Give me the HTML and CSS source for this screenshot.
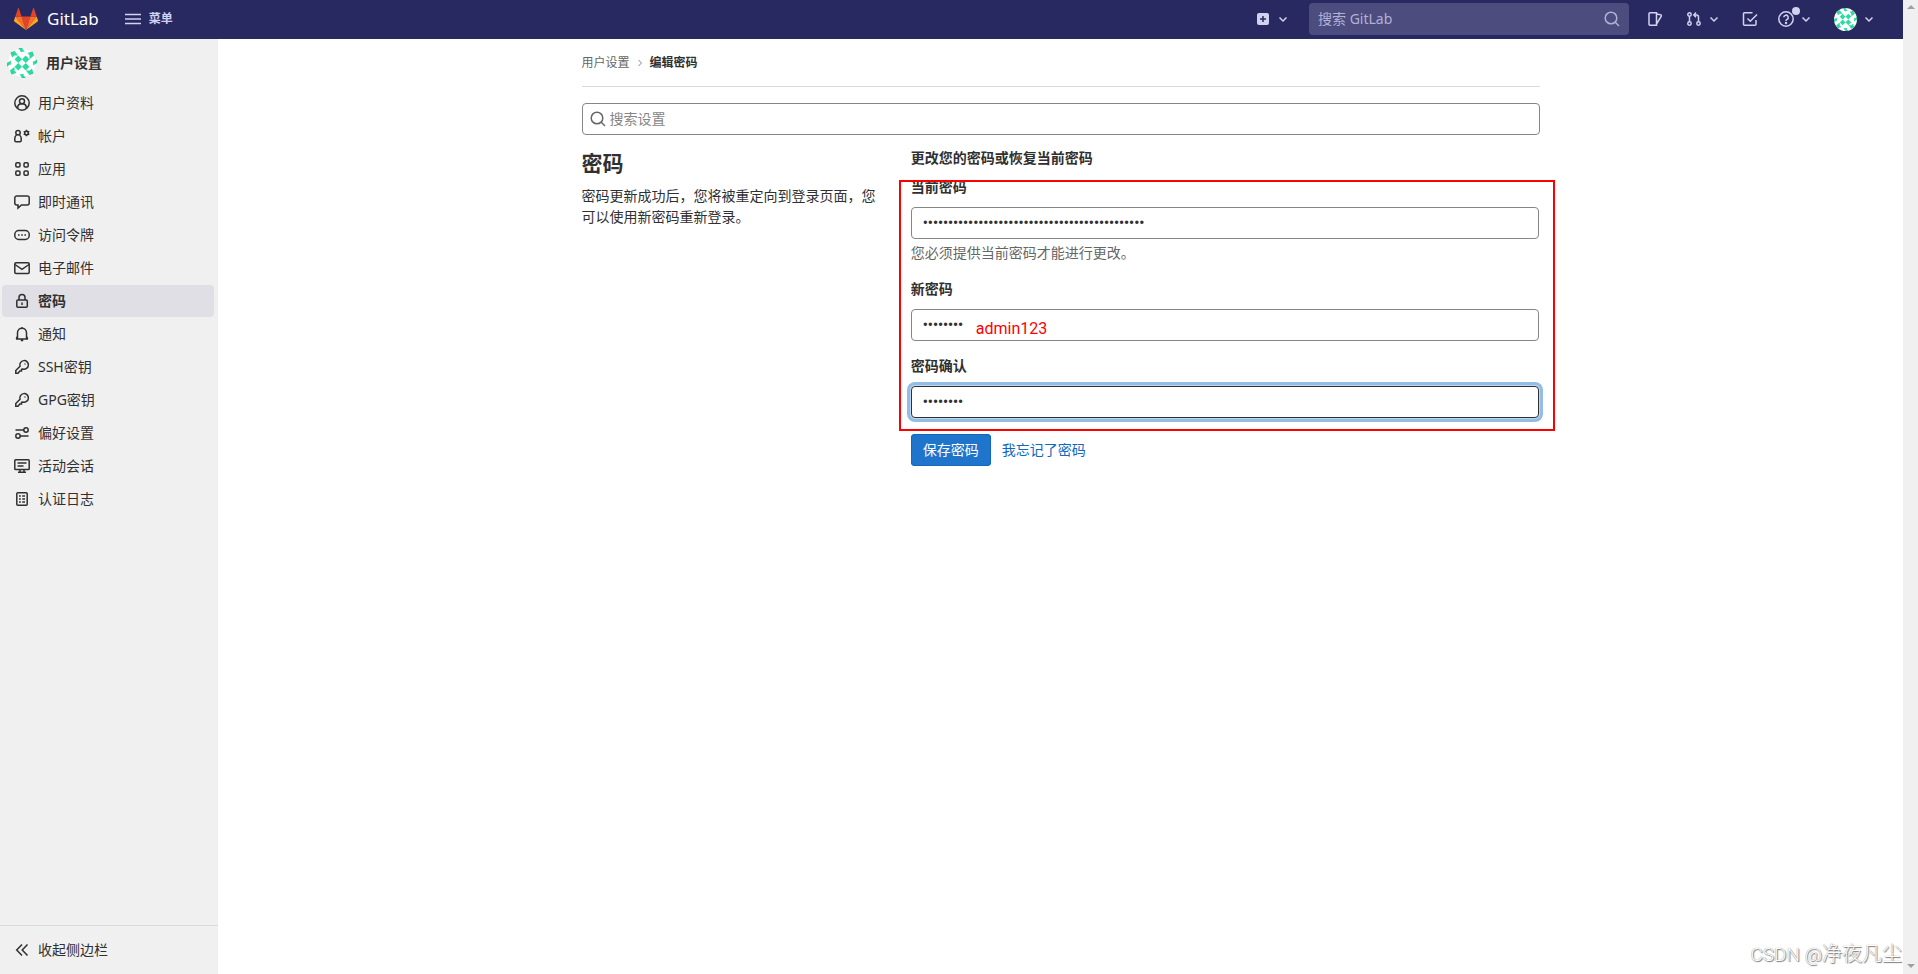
FILE: index.html
```
<!DOCTYPE html>
<html lang="zh-CN">
<head>
<meta charset="utf-8">
<title>编辑密码 · 用户设置 · GitLab</title>
<link rel="stylesheet" href="styles.css">
</head>
<body>
<svg class="sprite" aria-hidden="true">
  <symbol id="chevron" viewBox="0 0 16 16"><path d="M4.500 6.500 8 10l3.500-3.500"/></symbol>
  <symbol id="search" viewBox="0 0 16 16"><circle cx="7" cy="7" r="5.800"/><path d="m11 11 4 4"/></symbol>
  <symbol id="key" viewBox="0 0 16 16"><path d="M6 7.200A4.300 4.300 0 1 1 8.800 10L7.500 10.300V12H5.800L4 14.200H1.800V11.500Z"/><circle cx="11" cy="5" r=".7" class="solid"/></symbol>
  <symbol id="identicon" viewBox="0 0 30 30">
    <circle cx="15" cy="15" r="15" fill="#fff"/>
    <g id="quarter" fill="#2bdc9f">
      <path d="M11.200 7.600 15 11.300 11.200 15 7.600 11.300Z"/>
      <path d="M11.200 0H15V4.500Z"/>
      <path d="M3.500 4.500 7.500 3 11.200 7.500H7.500L5 9.500Z"/>
      <path d="M0 15 3.800 12.500V17Z"/>
    </g>
    <use href="#quarter" transform="rotate(90 15 15)"/>
    <use href="#quarter" transform="rotate(180 15 15)"/>
    <use href="#quarter" transform="rotate(270 15 15)"/>
    <circle cx="15" cy="15" r="14.500" fill="none" stroke="#000" stroke-opacity=".08"/>
  </symbol>
</svg>

<div class="window">
  <div class="app">
    <header class="navbar">
      <a class="brand" href="#">
        <svg class="tanuki" viewBox="0 0 24 22" aria-hidden="true">
          <path fill="#e24329" d="M12 22 16.400 8.500H7.600Z"/>
          <path fill="#fc6d26" d="M12 22 7.600 8.500H1.300Z"/>
          <path fill="#fca326" d="M1.300 8.500 0 12.600c-.1.400 0 .8.300 1L12 22Z"/>
          <path fill="#e24329" d="M1.300 8.500h6.300L4.900.4c-.1-.4-.7-.4-.9 0Z"/>
          <path fill="#fc6d26" d="m12 22 4.400-13.500h6.300Z"/>
          <path fill="#fca326" d="M22.700 8.500 24 12.600c.1.400 0 .8-.3 1L12 22Z"/>
          <path fill="#e24329" d="M22.700 8.500h-6.300L19.100.4c.1-.4.7-.4.9 0Z"/>
        </svg>
        <span>GitLab</span>
      </a>
      <button class="menu" type="button">
        <svg class="icon" viewBox="0 0 16 16" aria-hidden="true"><path d="M0 3.500h16M0 8h16M0 12.500h16"/></svg>
        <span>菜单</span>
      </button>
      <div class="tools">
        <button class="tool" type="button" aria-label="新建">
          <svg class="icon" viewBox="0 0 16 16"><rect x="2" y="2" width="12" height="12" rx="2" fill="#d1d1f0" stroke="none"/><path class="dark" d="M8 5v6M5 8h6"/></svg>
          <svg class="icon"><use href="#chevron"/></svg>
        </button>
        <form class="global-search">
          <input type="search" placeholder="搜索 GitLab" aria-label="搜索 GitLab">
          <svg class="icon"><use href="#search"/></svg>
        </form>
        <a class="tool issues" href="#" aria-label="议题">
          <svg class="icon" viewBox="0 0 16 16"><path d="M3 1.800h6.500v12.500H3a1 1 0 0 1-1-1V2.800a1 1 0 0 1 1-1ZM9.500 3l4 .8a1 1 0 0 1 .8 1.300L9.500 13"/></svg>
        </a>
        <button class="tool" type="button" aria-label="合并请求">
          <svg class="icon" viewBox="0 0 16 16"><circle cx="3.500" cy="3.500" r="1.700"/><circle cx="3.500" cy="12.500" r="1.700"/><circle cx="12.500" cy="12.500" r="1.700"/><path d="M3.500 5.200v5.600M12.500 10.800V6a2 2 0 0 0-2-2H8M10 1.500 7.800 4 10 6.300"/></svg>
          <svg class="icon"><use href="#chevron"/></svg>
        </button>
        <a class="tool" href="#" aria-label="待办事项">
          <svg class="icon" viewBox="0 0 16 16"><path d="M10.500 1.800H2.500a1 1 0 0 0-1 1v10.500a1 1 0 0 0 1 1h10.500a1 1 0 0 0 1-1V9M5.500 7.500 8.300 10.300 15 3.500"/></svg>
        </a>
        <button class="tool help" type="button" aria-label="帮助">
          <svg class="icon" viewBox="0 0 16 16"><circle cx="8" cy="8" r="7.200"/><path d="M5.800 6.300a2.200 2.200 0 1 1 3.200 2C8.200 8.700 8 9 8 10"/><circle cx="8" cy="11.900" r=".5"/></svg>
          <svg class="icon"><use href="#chevron"/></svg>
        </button>
        <button class="tool" type="button" aria-label="用户菜单">
          <svg class="avatar-small"><use href="#identicon"/></svg>
          <svg class="icon"><use href="#chevron"/></svg>
        </button>
      </div>
    </header>

    <div class="body">
      <aside class="sidebar">
        <a class="context" href="#"><svg class="avatar"><use href="#identicon"/></svg><span>用户设置</span></a>
        <nav class="nav" aria-label="用户设置">
          <a href="#"><svg class="icon" viewBox="0 0 16 16"><circle cx="8" cy="8" r="7.200"/><circle cx="8" cy="6.200" r="2.500"/><path d="M3.800 13.500V12c0-2 1.500-3.300 4.200-3.300s4.200 1.300 4.200 3.300v1.500"/></svg>用户资料</a>
          <a href="#"><svg class="icon" viewBox="0 0 16 16"><circle cx="4" cy="4.800" r="2.200"/><path d="M2.500 7C1.300 7.800.8 9 .8 10.500v2c0 .8.400 1.200 1.200 1.200h4c.8 0 1.200-.4 1.200-1.200v-2C7.200 9 6.700 7.800 5.500 7"/><circle cx="12.500" cy="5" r="1.800"/><path d="M12.500 1.800v1.400M12.500 6.800v1.400M9.700 3.400l1.200.7M14.100 5.900l1.200.7M9.700 6.600l1.200-.7M14.100 4.100l1.200-.7"/></svg>帐户</a>
          <a href="#"><svg class="icon" viewBox="0 0 16 16"><rect x="1.800" y="1.800" width="4.200" height="4.200" rx="1.200"/><rect x="10" y="1.800" width="4.200" height="4.200" rx="1.200"/><rect x="1.800" y="10" width="4.200" height="4.200" rx="1.200"/><rect x="10" y="10" width="4.200" height="4.200" rx="1.200"/></svg>应用</a>
          <a href="#"><svg class="icon" viewBox="0 0 16 16"><path d="M2.800 2h10.400a2 2 0 0 1 2 2v5a2 2 0 0 1-2 2H7.500L4 14v-3H2.800a2 2 0 0 1-2-2V4a2 2 0 0 1 2-2Z"/></svg>即时通讯</a>
          <a href="#"><svg class="icon" viewBox="0 0 16 16"><rect x=".8" y="3.500" width="14.400" height="9" rx="4"/><path d="M4 8h1.600M7.200 8h1.600M10.400 8H12"/></svg>访问令牌</a>
          <a href="#"><svg class="icon" viewBox="0 0 16 16"><rect x=".8" y="2.800" width="14.400" height="10.700" rx="1.200"/><path d="m1 4.500 7 4.800 7-4.800"/></svg>电子邮件</a>
          <a class="active" href="#" aria-current="page"><svg class="icon" viewBox="0 0 16 16"><rect x="2.800" y="7" width="10.500" height="7.300" rx="1"/><path d="M5 7V4.500C5 2.700 6.300 1.600 8 1.600s3 1.100 3 2.900V7M8 9.500V12"/></svg>密码</a>
          <a href="#"><svg class="icon" viewBox="0 0 16 16"><path d="M2 13h12M3.500 12.500V6.800C3.500 4 5.500 2.200 8 2.200s4.500 1.800 4.500 4.600v5.700M3.500 10 2.300 13M12.500 10l1.200 3M6.800 14.500h2.400M8 1v1"/></svg>通知</a>
          <a href="#"><svg class="icon"><use href="#key"/></svg>SSH密钥</a>
          <a href="#"><svg class="icon"><use href="#key"/></svg>GPG密钥</a>
          <a href="#"><svg class="icon" viewBox="0 0 16 16"><circle cx="12" cy="5" r="2.200"/><circle cx="4" cy="11" r="2.200"/><path d="M1.500 5h8.300M6.200 11h8.300"/></svg>偏好设置</a>
          <a href="#"><svg class="icon" viewBox="0 0 16 16"><rect x=".8" y="1.800" width="14.400" height="9.700" rx=".8"/><path d="M3.500 5h9M3.500 8h6M6 11.500V14M10 11.500V14M4 14.200h8"/></svg>活动会话</a>
          <a href="#"><svg class="icon" viewBox="0 0 16 16"><rect x="2.800" y="1.800" width="10.400" height="12.400" rx="1"/><path d="M5 5h1.800M8.200 5H11M5 8h1.800M8.200 8H11M5 11h1.800M8.200 11H11"/></svg>认证日志</a>
        </nav>
        <button class="collapse" type="button"><svg class="icon" viewBox="0 0 16 16"><path d="M8 2.500 2.700 8 8 13.500M13.500 2.500 8.200 8l5.300 5.500"/></svg>收起侧边栏</button>
      </aside>

      <main class="content">
        <nav class="breadcrumb" aria-label="面包屑">
          <a href="#">用户设置</a>
          <svg class="crumb-sep" viewBox="0 0 8 8" aria-hidden="true"><path d="M2.500 1 5.500 4 2.500 7"/></svg>
          <a class="current" href="#">编辑密码</a>
        </nav>
        <div class="settings-search">
          <svg class="icon"><use href="#search"/></svg>
          <input class="field" type="search" placeholder="搜索设置" aria-label="搜索设置">
        </div>
        <div class="columns">
          <section class="intro">
            <h1>密码</h1>
            <p>密码更新成功后，您将被重定向到登录页面，您可以使用新密码重新登录。</p>
          </section>
          <form class="password-form">
            <h2>更改您的密码或恢复当前密码</h2>
            <div class="marked">
              <div class="group">
                <label for="current">当前密码</label>
                <input class="field" id="current" type="password" value="aaaaaaaaaaaaaaaaaaaaaaaaaaaaaaaaaaaaaaaaaaaa">
                <p class="hint">您必须提供当前密码才能进行更改。</p>
              </div>
              <div class="group">
                <label for="new">新密码</label>
                <div class="noted">
                  <input class="field" id="new" type="password" value="admin123">
                  <span class="note">admin123</span>
                </div>
              </div>
              <div class="group">
                <label for="confirm">密码确认</label>
                <input class="field focused" id="confirm" type="password" value="admin123">
              </div>
            </div>
            <div class="actions">
              <button class="save" type="submit">保存密码</button>
              <a href="#">我忘记了密码</a>
            </div>
          </form>
        </div>
      </main>
    </div>
    <div class="watermark">CSDN @<span>净夜凡尘</span></div>
  </div>
  <div class="scrollbar" aria-hidden="true"><i class="up"></i><i class="down"></i></div>
</div>
</body>
</html>
```
FILE: styles.css
```
* { box-sizing: border-box; }

body {
  margin: 0;
  font: 14px/20px "Noto Sans", "Noto Sans CJK SC", sans-serif;
  color: #303030;
  background: #fff;
}

a { color: inherit; text-decoration: none; }
button, input { font: inherit; color: inherit; margin: 0; }
button { border: 0; background: none; padding: 0; }
h1, h2, p { margin: 0; }

.sprite { position: absolute; width: 0; height: 0; }

.icon {
  width: 16px;
  height: 16px;
  flex: none;
  fill: none;
  stroke: currentColor;
  stroke-width: 1.5;
}
.icon .dark { stroke: #292961; }
.solid { fill: currentColor; stroke: none; }

.window { display: flex; min-height: 100vh; }
.app { position: relative; flex: 1; display: flex; flex-direction: column; }

/* Top bar */
.navbar {
  display: flex;
  align-items: center;
  height: 39px;
  padding: 0 16px 1px 14px;
  background: #292961;
  color: #d1d1f0;
}
.brand {
  display: flex;
  align-items: center;
  gap: 9px;
  font-size: 17px;
  color: #fff;
}
.tanuki { width: 24px; height: 22px; }
.menu {
  display: flex;
  align-items: center;
  gap: 8px;
  margin-left: 26px;
  font-size: 12px;
  line-height: 18px;
  font-weight: 700;
}
.tools { display: flex; align-items: center; margin-left: auto; }
.tool {
  position: relative;
  display: flex;
  align-items: center;
  gap: 4px;
  padding: 0 10px;
}
.issues { margin-right: 3px; }
.help::after {
  content: "";
  position: absolute;
  left: 24px;
  top: -4px;
  width: 8px;
  height: 8px;
  border-radius: 50%;
  background: #d1d1f0;
}
.avatar-small { width: 23px; height: 23px; }
.global-search {
  display: flex;
  align-items: center;
  width: 320px;
  height: 32px;
  margin: 0 8px;
  padding: 0 9px;
  border-radius: 4px;
  background: #4c4c7e;
  color: #b1b1d6;
}
.global-search input {
  flex: 1;
  min-width: 0;
  padding: 0 0 1px;
  border: 0;
  background: none;
}
.global-search input::placeholder { color: #b1b1d6; }

/* Side bar */
.body { flex: 1; display: flex; }
.sidebar {
  display: flex;
  flex-direction: column;
  width: 218px;
  flex: none;
  background: #f0f0f0;
}
.context {
  display: flex;
  align-items: center;
  gap: 9px;
  height: 48px;
  padding-left: 7px;
  font-weight: 700;
}
.avatar { width: 30px; height: 30px; }
.nav {
  display: flex;
  flex-direction: column;
  gap: 1px;
  padding: 0 4px 0 2px;
}
.nav a, .collapse {
  display: flex;
  align-items: center;
  gap: 8px;
}
.nav a {
  height: 32px;
  padding: 0 0 1px 12px;
  border-radius: 4px;
}
.nav .active { background: #e0dfe5; font-weight: 700; }
.collapse {
  height: 49px;
  margin-top: auto;
  padding: 0 0 1px 14px;
  border-top: 1px solid #dbdbdb;
}

/* Content */
.content {
  flex: 1;
  max-width: 990px;
  margin: 0 auto;
  padding: 0 16px;
}
.breadcrumb {
  display: flex;
  align-items: center;
  gap: 6px;
  height: 48px;
  margin-bottom: 16px;
  border-bottom: 1px solid #dbdbdb;
  font-size: 12px;
  color: #666;
}
.crumb-sep { width: 8px; height: 8px; fill: none; stroke: #868686; }
.current { font-weight: 700; color: #303030; }

.field {
  display: block;
  width: 100%;
  height: 32px;
  padding: 0 11px 1px;
  border: 1px solid #868686;
  border-radius: 4px;
  background: #fff;
  outline: 0;
}
.field::placeholder { color: #868686; }
.field[type="password"] { font-family: Roboto, sans-serif; font-weight: 700; }
.field.focused {
  border-color: #303030;
  box-shadow: 0 0 0 1px rgba(255, 255, 255, .4), 0 0 0 4px rgba(31, 117, 203, .48);
}

.settings-search { position: relative; }
.settings-search .icon { position: absolute; left: 8px; top: 8px; color: #666; }
.settings-search .field { padding-left: 27px; }

.columns {
  display: grid;
  grid-template-columns: 1fr 2fr;
  margin: 0 -15px;
}
.intro { padding: 16px 15px 0; }
.intro h1 { font-size: 21px; line-height: 24px; margin-bottom: 10px; }
.intro p { line-height: 21px; }
.password-form { padding: 13px 16px 0 15px; }
.password-form h2 { font-size: 14px; line-height: 20px; margin-bottom: 9px; }
.group { margin-bottom: 15px; }
.group label { display: block; margin-bottom: 10px; font-weight: 700; }
.hint { margin-top: 4px; line-height: 20px; padding-bottom: 1px; color: #666; }

/* Annotation frame drawn over the fields */
.marked { position: relative; }
.marked::after {
  content: "";
  position: absolute;
  inset: 3px -16px -13px -12px;
  border: 2px solid #f00;
  pointer-events: none;
}
.noted { position: relative; }
.note {
  position: absolute;
  left: 65px;
  top: 10px;
  font-family: Roboto, sans-serif;
  font-size: 16px;
  color: #f00;
}

.actions {
  display: flex;
  align-items: center;
  gap: 11px;
  margin-top: 16px;
  color: #1068bf;
}
.save {
  height: 32px;
  padding: 0 12px 1px;
  border-radius: 4px;
  background: #1f75cb;
  box-shadow: inset 0 0 0 1px #1068bf;
  color: #fff;
}

.watermark {
  position: absolute;
  right: 1px;
  bottom: 6px;
  font: 300 19px/26px Roboto, "Noto Sans CJK SC", sans-serif;
  color: #fff;
  text-shadow: 1px 1px 1px #777, 0 0 1px #777;
}
.watermark span { font-size: 20px; }

.scrollbar {
  display: flex;
  flex-direction: column;
  justify-content: space-between;
  align-items: center;
  width: 15px;
  padding: 5px 0 6px;
  background: #f0f0f0;
}
.up, .down { border: 4px solid transparent; }
.up { border-top: 0; border-bottom-color: #a0a0a0; }
.down { border-bottom: 0; border-top-color: #a0a0a0; }
```
